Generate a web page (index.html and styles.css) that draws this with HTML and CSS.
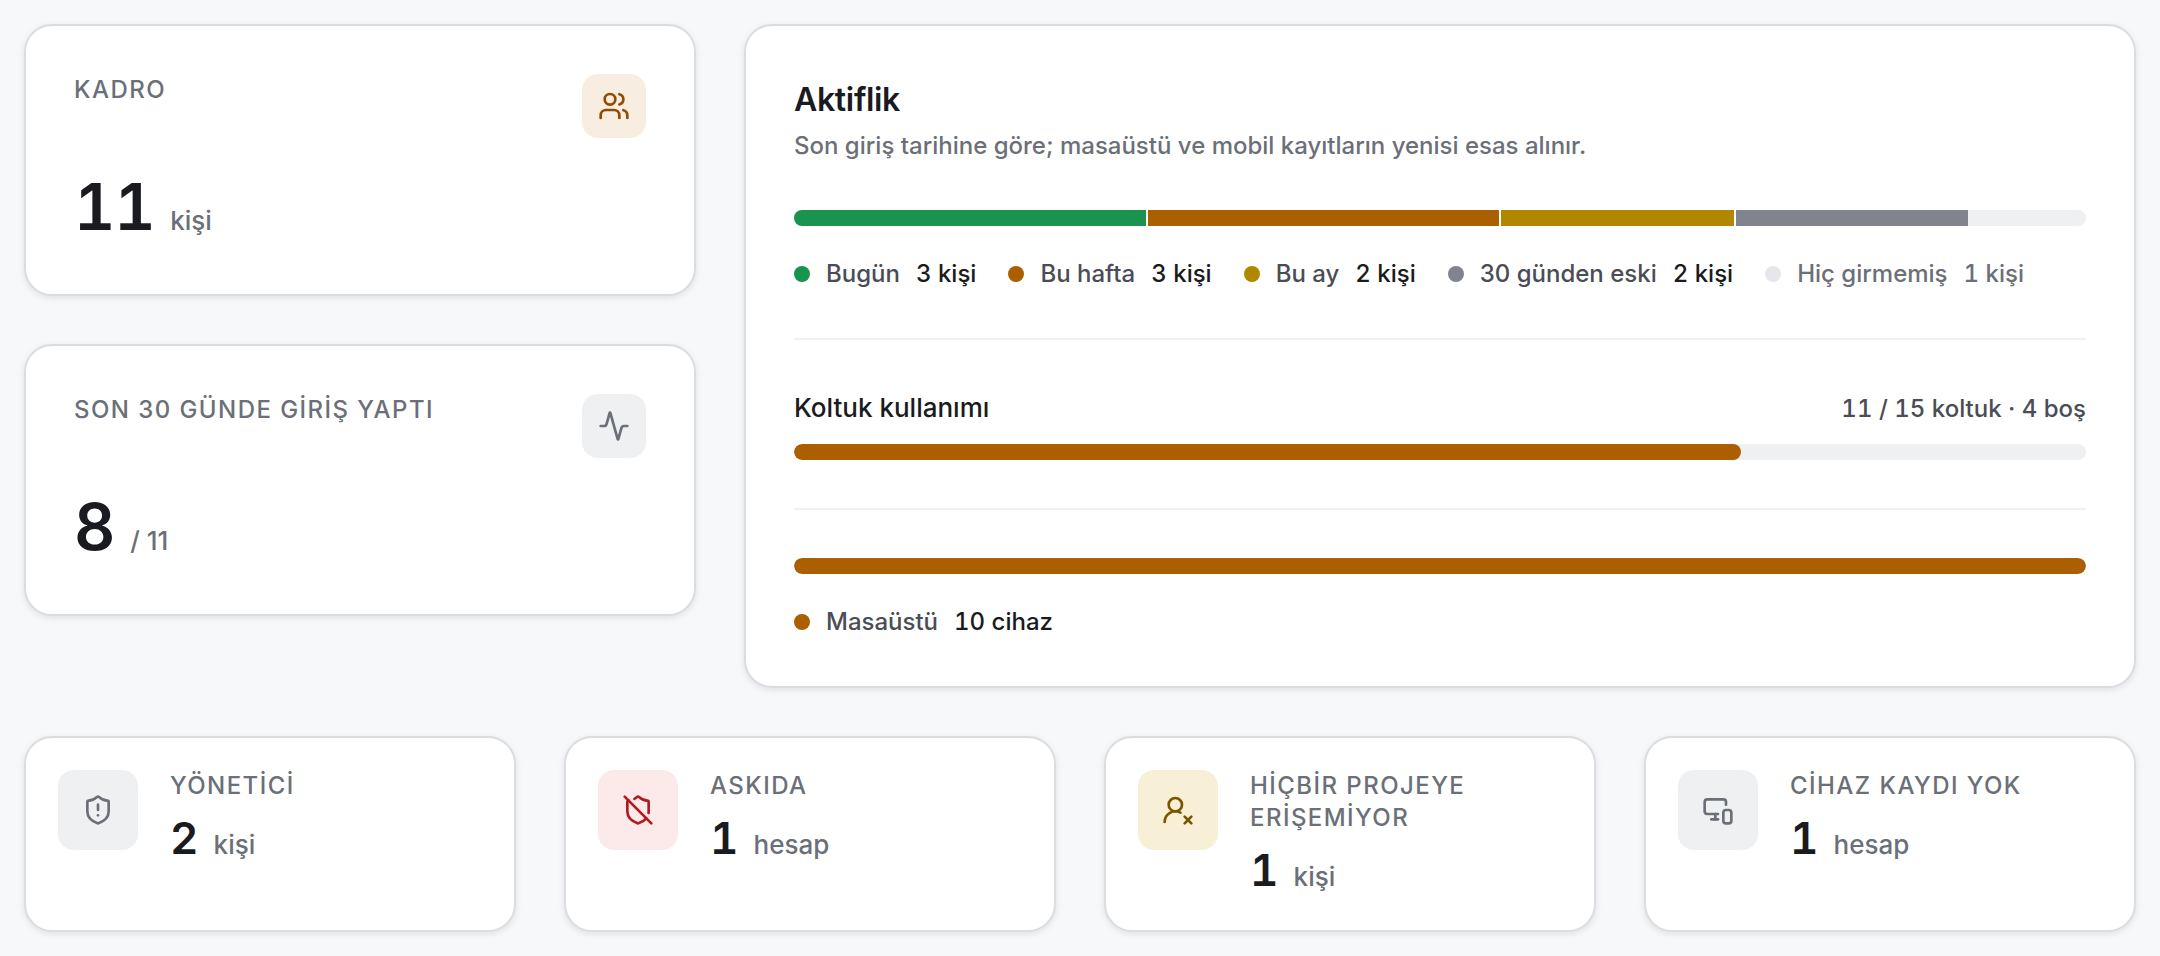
FILE: index.html
```html
<!DOCTYPE html>
<html lang="tr">
<head>
  <meta charset="UTF-8">
  <meta name="viewport" content="width=device-width, initial-scale=1.0">
  <title>Kadro Özeti</title>
  <link rel="stylesheet" href="styles.css">
</head>
<body>
  <main class="dashboard">
    <div class="overview">
      <div class="kpi-column">
        <section class="card kpi">
          <div class="kpi-head">
            <h2 class="label">KADRO</h2>
            <span class="icon-box brand">
              <svg class="icon" viewBox="0 0 24 24" aria-hidden="true"><path d="M16 21v-2a4 4 0 0 0-4-4H6a4 4 0 0 0-4 4v2"/><circle cx="9" cy="7" r="4"/><path d="M22 21v-2a4 4 0 0 0-3-3.87"/><path d="M16 3.13a4 4 0 0 1 0 7.75"/></svg>
            </span>
          </div>
          <p class="figure large"><strong>11</strong><span class="unit">kişi</span></p>
        </section>

        <section class="card kpi">
          <div class="kpi-head">
            <h2 class="label">SON 30 GÜNDE GİRİŞ YAPTI</h2>
            <span class="icon-box">
              <svg class="icon" viewBox="0 0 24 24" aria-hidden="true"><path d="M22 12h-2.48a2 2 0 0 0-1.93 1.46l-2.35 8.36a.25.25 0 0 1-.48 0L9.24 2.18a.25.25 0 0 0-.48 0l-2.35 8.36A2 2 0 0 1 4.49 12H2"/></svg>
            </span>
          </div>
          <p class="figure large"><strong>8</strong><span class="unit">/ 11</span></p>
        </section>
      </div>

      <!-- Aktiflik -->
      <section class="card activity">
        <div class="block">
          <h2 class="title">Aktiflik</h2>
          <p class="subtitle">Son giriş tarihine göre; masaüstü ve mobil kayıtların yenisi esas alınır.</p>
          <div class="bar activity-bar">
            <span class="segment today" style="width: 27.27%"></span>
            <span class="segment week" style="width: 27.27%"></span>
            <span class="segment month" style="width: 18.18%"></span>
            <span class="segment older" style="width: 18.18%"></span>
          </div>
          <ul class="legend">
            <li><span class="dot today"></span>Bugün<b>3 kişi</b></li>
            <li><span class="dot week"></span>Bu hafta<b>3 kişi</b></li>
            <li><span class="dot month"></span>Bu ay<b>2 kişi</b></li>
            <li><span class="dot older"></span>30 günden eski<b>2 kişi</b></li>
            <li class="muted"><span class="dot never"></span>Hiç girmemiş<b>1 kişi</b></li>
          </ul>
        </div>

        <!-- Koltuk -->
        <div class="block">
          <div class="seat-head">
            <h3 class="seat-title">Koltuk kullanımı</h3>
            <span class="seat-count">11 / 15 koltuk · 4 boş</span>
          </div>
          <div class="bar">
            <span class="fill" style="width: 73.33%"></span>
          </div>
        </div>

        <!-- Cihazlar -->
        <div class="block">
          <div class="bar">
            <span class="fill" style="width: 100%"></span>
          </div>
          <ul class="legend">
            <li><span class="dot week"></span>Masaüstü<b>10 cihaz</b></li>
          </ul>
        </div>
      </section>
    </div>

    <div class="stats">
      <section class="card stat">
        <span class="icon-box big">
          <svg class="icon" viewBox="0 0 24 24" aria-hidden="true"><path d="M20 13c0 5-3.5 7.5-7.66 8.95a1 1 0 0 1-.67-.01C7.5 20.5 4 18 4 13V6a1 1 0 0 1 1-1c2 0 4.5-1.2 6.24-2.72a1.17 1.17 0 0 1 1.52 0C14.51 3.81 17 5 19 5a1 1 0 0 1 1 1z"/><path d="M12 8v4"/><path d="M12 16h.01"/></svg>
        </span>
        <div class="stat-body">
          <h2 class="label">YÖNETİCİ</h2>
          <p class="figure"><strong>2</strong><span class="unit">kişi</span></p>
        </div>
      </section>

      <section class="card stat">
        <span class="icon-box big danger">
          <svg class="icon" viewBox="0 0 24 24" aria-hidden="true"><path d="m2 2 20 20"/><path d="M5 5a1 1 0 0 0-1 1v7c0 5 3.5 7.5 7.67 8.94a1 1 0 0 0 .67.01c2.35-.82 4.48-1.97 5.9-3.71"/><path d="M9.309 3.652A12.252 12.252 0 0 0 11.24 2.28a1.17 1.17 0 0 1 1.52 0C14.51 3.81 17 5 19 5a1 1 0 0 1 1 1v7a9.784 9.784 0 0 1-.08 1.264"/></svg>
        </span>
        <div class="stat-body">
          <h2 class="label">ASKIDA</h2>
          <p class="figure"><strong>1</strong><span class="unit">hesap</span></p>
        </div>
      </section>

      <section class="card stat">
        <span class="icon-box big warning">
          <svg class="icon" viewBox="0 0 24 24" aria-hidden="true"><path d="M2 21a8 8 0 0 1 11.873-7"/><circle cx="10" cy="8" r="5"/><path d="m17 17 5 5"/><path d="m22 17-5 5"/></svg>
        </span>
        <div class="stat-body">
          <h2 class="label">HİÇBİR PROJEYE ERİŞEMİYOR</h2>
          <p class="figure"><strong>1</strong><span class="unit">kişi</span></p>
        </div>
      </section>

      <section class="card stat">
        <span class="icon-box big">
          <svg class="icon" viewBox="0 0 24 24" aria-hidden="true"><path d="M18 8V6a2 2 0 0 0-2-2H4a2 2 0 0 0-2 2v7a2 2 0 0 0 2 2h8"/><path d="M10 19v-3.96 3.15"/><path d="M7 19h5"/><rect width="6" height="10" x="16" y="12" rx="2"/></svg>
        </span>
        <div class="stat-body">
          <h2 class="label">CİHAZ KAYDI YOK</h2>
          <p class="figure"><strong>1</strong><span class="unit">hesap</span></p>
        </div>
      </section>
    </div>
  </main>
</body>
</html>
```
FILE: styles.css
```css
* {
  box-sizing: border-box;
}
body {
  margin: 0;
  background: #f7f8fa;
  color: #1a1b20;
  font-family: Inter, "Liberation Sans", sans-serif;
  font-size: 24px;
  font-weight: 500;
  line-height: 32px;
}
h2, h3, p, ul {
  margin: 0;
  padding: 0;
}
.dashboard {
  display: grid;
  gap: 48px;
  padding: 24px;
}
.overview {
  display: grid;
  grid-template-columns: repeat(3, minmax(0, 1fr));
  gap: 48px;
  align-items: start;
}
.kpi-column {
  display: grid;
  gap: 48px;
}
.card {
  background: #fff;
  border: 2px solid #dcdde1;
  border-radius: 28px;
  box-shadow: 0 2px 6px rgba(20, 22, 30, 0.1);
}

/* Kartlar */
.kpi {
  display: grid;
  gap: 30px;
  padding: 48px;
}
.kpi-head {
  display: flex;
  justify-content: space-between;
  align-items: flex-start;
}
.label {
  color: #6b6f78;
  font-size: 24px;
  font-weight: 500;
  letter-spacing: 0.06em;
}
.icon-box {
  display: flex;
  flex: none;
  align-items: center;
  justify-content: center;
  width: 64px;
  height: 64px;
  border-radius: 16px;
  background: #eff0f2;
  color: #6b6f78;
}
.icon-box.big {
  width: 80px;
  height: 80px;
}
.icon-box.brand {
  background: #f8ede1;
  color: #944a00;
}
.icon-box.danger {
  background: #fce9ea;
  color: #b01b1f;
}
.icon-box.warning {
  background: #f8f0d6;
  color: #7a5400;
}
.icon {
  width: 32px;
  height: 32px;
  fill: none;
  stroke: currentColor;
  stroke-width: 2;
  stroke-linecap: round;
  stroke-linejoin: round;
}
.figure {
  display: flex;
  align-items: baseline;
  gap: 16px;
}
.figure strong {
  font-size: 44px;
  font-weight: 600;
  line-height: 56px;
  letter-spacing: -0.02em;
  font-variant-numeric: tabular-nums;
}
.figure.large strong {
  font-size: 64px;
  line-height: 78px;
}
.unit {
  color: #6b6f78;
  font-size: 26px;
}

/* Aktiflik paneli */
.activity {
  grid-column: span 2;
  padding: 48px;
}
.block + .block {
  margin-top: 48px;
  padding-top: 48px;
  border-top: 2px solid #eff0f2;
}
.title {
  font-size: 32px;
  font-weight: 600;
  line-height: 52px;
  letter-spacing: -0.01em;
}
.subtitle {
  margin-top: 4px;
  color: #6b6f78;
}
.bar {
  display: flex;
  height: 16px;
  border-radius: 8px;
  background: #eff0f2;
  overflow: hidden;
}
.activity-bar {
  margin-top: 48px;
}
.segment + .segment {
  border-left: 2px solid #fff;
}
.fill {
  border-radius: 8px;
  background: #ab5f00;
}
.today {
  background: #1a934f;
}
.week {
  background: #ab5f00;
}
.month {
  background: #b18700;
}
.older {
  background: #81848e;
}
.never {
  background: #e6e7eb;
}
.legend {
  display: flex;
  flex-wrap: wrap;
  gap: 16px 32px;
  margin-top: 32px;
  color: #4a4d55;
  list-style: none;
}
.legend li {
  display: flex;
  align-items: center;
  gap: 16px;
}
.legend b {
  color: #1a1b20;
  font-weight: 500;
  font-variant-numeric: tabular-nums;
}
.legend .muted,
.legend .muted b {
  color: #6b6f78;
}
.dot {
  width: 16px;
  height: 16px;
  border-radius: 50%;
}
.seat-head {
  display: flex;
  justify-content: space-between;
  align-items: baseline;
  margin-bottom: 16px;
}
.seat-title {
  font-size: 26px;
  font-weight: 500;
  line-height: 40px;
}
.seat-count {
  color: #4a4d55;
  font-variant-numeric: tabular-nums;
}

/* Alt satır */
.stats {
  display: grid;
  grid-template-columns: repeat(4, minmax(0, 1fr));
  gap: 48px;
}
.stat {
  display: flex;
  align-items: flex-start;
  gap: 32px;
  padding: 32px;
}
.stat-body {
  display: grid;
  gap: 8px;
  min-width: 0;
}
```
